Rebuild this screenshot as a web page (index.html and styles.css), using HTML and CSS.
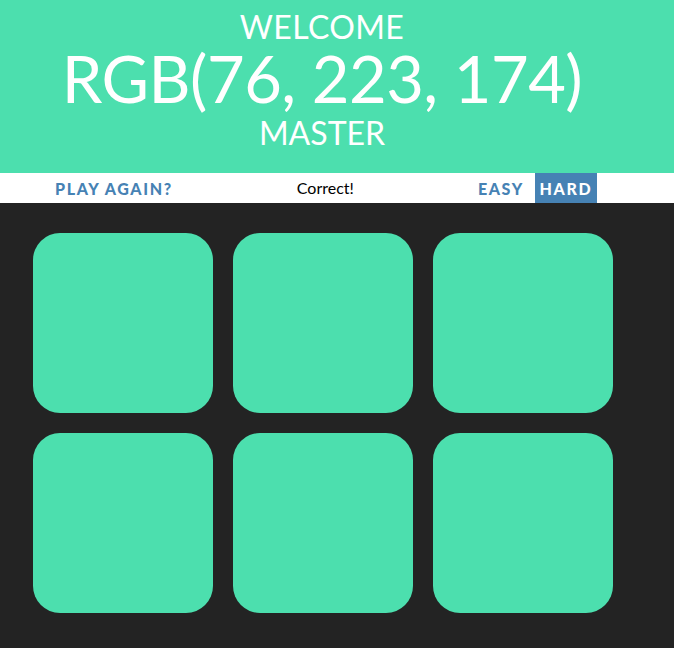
FILE: index.html
```html
<!DOCTYPE html>
<html lang="en">
<head>
<meta charset="utf-8">
<title>Color Game</title>
<link rel="stylesheet" href="styles.css">
</head>
<body>
<h1 class="title">
  <span class="title-line welcome">Welcome</span>
  <span class="title-line color-display">RGB(76, 223, 174)</span>
  <span class="title-line master">Master</span>
</h1>
<div class="stripe">
  <button class="btn reset">Play Again?</button>
  <span class="message">Correct!</span>
  <button class="btn mode">Easy</button>
  <button class="btn mode selected">Hard</button>
</div>
<div class="grid">
  <div class="square"></div>
  <div class="square"></div>
  <div class="square"></div>
  <div class="square"></div>
  <div class="square"></div>
  <div class="square"></div>
</div>
</body>
</html>
```

FILE: styles.css
```css
* { box-sizing: border-box; }
html, body { margin: 0; padding: 0; }
body {
  background: #232323;
  font-family: Lato, "Open Sans", sans-serif;
  width: 674px;
  height: 648px;
  overflow: hidden;
}
.title {
  margin: 0;
  background: #4cdfae;
  color: #ffffff;
  font-weight: 400;
  text-align: center;
  text-transform: uppercase;
  padding: 9px 30px 22px 0;
  height: 173px;
}
.title-line { display: block; }
.welcome { font-size: 32px; line-height: 36px; letter-spacing: 0.4px; }
.color-display { font-size: 65px; line-height: 66px; font-weight: 400; letter-spacing: -0.5px; }
.master { font-size: 32px; line-height: 36px; margin-top: 4px; }
.stripe {
  background: #ffffff;
  height: 30px;
  display: flex;
  align-items: stretch;
  padding-left: 49px;
}
.btn {
  border: none;
  background: none;
  font-family: Lato, "Open Sans", sans-serif;
  font-size: 16px;
  font-weight: 900;
  text-transform: uppercase;
  letter-spacing: 1.65px;
  color: #4682b4;
  padding: 0 6px;
  margin: 0;
  height: 30px;
}
.message {
  width: 293px;
  text-align: center;
  font-size: 16px;
  line-height: 30px;
  color: #000000;
}
.selected {
  background: #4682b4;
  color: #ffffff;
  margin-left: 5px;
  width: 62px;
  padding: 0;
}
.grid {
  display: grid;
  grid-template-columns: repeat(3, 180px);
  grid-auto-rows: 180px;
  gap: 20px;
  padding: 30px 0 0 33px;
}
.square {
  background: #4cdfae;
  border-radius: 27px;
}
```
